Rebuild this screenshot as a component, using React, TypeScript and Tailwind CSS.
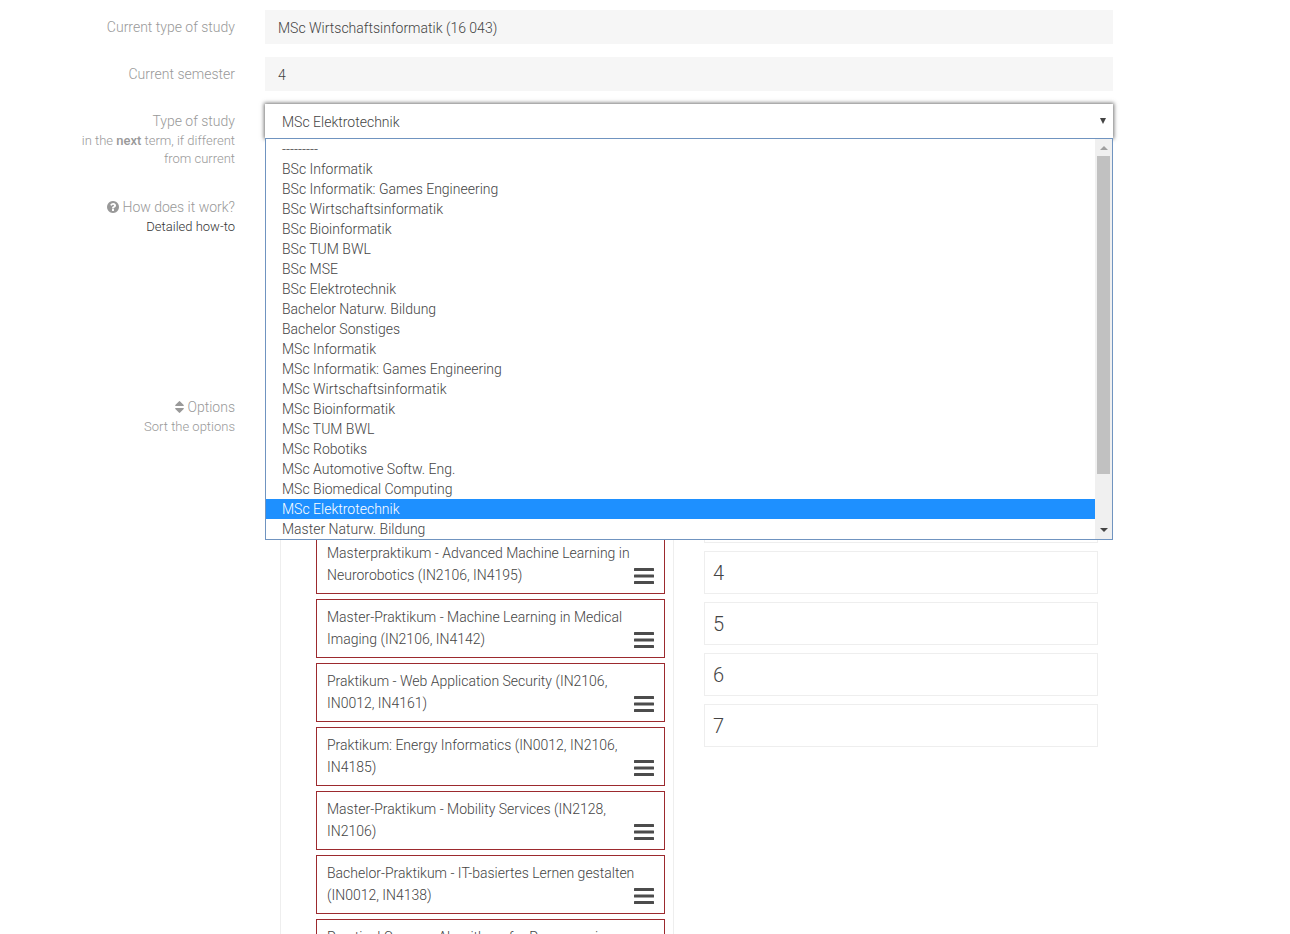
import type { ReactNode } from "react";

const studies = [
  "---------",
  "BSc Informatik",
  "BSc Informatik: Games Engineering",
  "BSc Wirtschaftsinformatik",
  "BSc Bioinformatik",
  "BSc TUM BWL",
  "BSc MSE",
  "BSc Elektrotechnik",
  "Bachelor Naturw. Bildung",
  "Bachelor Sonstiges",
  "MSc Informatik",
  "MSc Informatik: Games Engineering",
  "MSc Wirtschaftsinformatik",
  "MSc Bioinformatik",
  "MSc TUM BWL",
  "MSc Robotiks",
  "MSc Automotive Softw. Eng.",
  "MSc Biomedical Computing",
  "MSc Elektrotechnik",
  "Master Naturw. Bildung",
];

const selected = "MSc Elektrotechnik";

const courses = [
  "Masterpraktikum - Advanced Machine Learning in Neurorobotics (IN2106, IN4195)",
  "Master-Praktikum - Machine Learning in Medical Imaging (IN2106, IN4142)",
  "Praktikum - Web Application Security (IN2106, IN0012, IN4161)",
  "Praktikum: Energy Informatics (IN0012, IN2106, IN4185)",
  "Master-Praktikum - Mobility Services (IN2128, IN2106)",
  "Bachelor-Praktikum - IT-basiertes Lernen gestalten (IN0012, IN4138)",
  "Practical Course - Algorithms for Programming",
];

const ranks = [1, 2, 3, 4, 5, 6, 7];

const QuestionIcon = () => (
  <svg viewBox="128 128 1536 1536" className="mr-[3px] inline-block size-3 align-[-1px]" fill="currentColor" aria-hidden="true">
    <path d="M1024 1376v-192q0-14-9-23t-23-9h-192q-14 0-23 9t-9 23v192q0 14 9 23t23 9h192q14 0 23-9t9-23zm256-672q0-88-55.5-163t-138.5-116-170-41q-243 0-371 213-15 24 8 42l132 100q7 6 19 6 16 0 25-12 53-68 86-92 34-24 86-24 48 0 85.5 26t37.5 59q0 38-20 61t-68 45q-63 28-115.5 86.5t-52.5 125.5v36q0 14 9 23t23 9h192q14 0 23-9t9-23q0-19 21.5-49.5t54.5-49.5q32-18 49-28.5t46-35 44.5-48 28-60.5 12.5-81zm384 192q0 209-103 385.5t-279.5 279.5-385.5 103-385.5-103-279.5-279.5-103-385.5 103-385.5 279.5-279.5 385.5-103 385.5 103 279.5 279.5 103 385.5z" />
  </svg>
);

const SortIcon = () => (
  <svg viewBox="384 192 1024 1408" className="mr-[3px] inline-block h-3 w-[9px] align-[-1px]" fill="currentColor" aria-hidden="true">
    <path d="M1408 1088q0 26-19 45l-448 448q-19 19-45 19t-45-19l-448-448q-19-19-19-45t19-45 45-19h896q26 0 45 19t19 45zm0-384q0 26-19 45t-45 19h-896q-26 0-45-19t-19-45 19-45l448-448q19-19 45-19t45 19l448 448q19 19 19 45z" />
  </svg>
);

const BarsIcon = () => (
  <svg viewBox="0 0 20 16" className="h-4 w-5" fill="#4c4c4c" aria-hidden="true">
    <rect width="20" height="3" rx="0.5" />
    <rect y="6.5" width="20" height="3" rx="0.5" />
    <rect y="13" width="20" height="3" rx="0.5" />
  </svg>
);

const Row = ({ label, children }: { label: ReactNode; children?: ReactNode }) => (
  <div className="flex gap-[30px]">
    <div className="w-[235px] shrink-0 pt-[7px] pl-[70px] text-right leading-5 text-[#999]">{label}</div>
    <div className="min-w-0 flex-1">{children}</div>
  </div>
);

const Arrow = ({ points, fill }: { points: string; fill: string }) => (
  <svg viewBox="0 0 8 4" className="h-1 w-2" fill={fill} aria-hidden="true">
    <polygon points={points} />
  </svg>
);

const StudyList = () => (
  <div className="absolute inset-x-0 top-full z-10 flex border border-[#7094c0] bg-white">
    <ul role="listbox" aria-label="Type of study" className="flex-1">
      {studies.map((study) => (
        <li
          key={study}
          role="option"
          aria-selected={study === selected}
          className={`h-5 pl-4 leading-5 ${study === selected ? "bg-[#1e90ff] text-white" : ""}`}
        >
          {study}
        </li>
      ))}
    </ul>
    <div className="flex w-[17px] flex-col items-center bg-[#f0f0f0]">
      <div className="flex h-[17px] items-center">
        <Arrow points="0,4 4,0 8,4" fill="#a0a0a0" />
      </div>
      <div className="h-[318px] w-[13px] bg-[#c1c1c1]" />
      <div className="mt-auto flex h-[18px] items-center">
        <Arrow points="0,0 4,4 8,0" fill="#444" />
      </div>
    </div>
  </div>
);

const CourseCard = ({ title }: { title: string }) => (
  <li className="flex min-h-[59px] items-end border border-[#9c2a2e] px-2.5 pt-1.5 pb-[7px]">
    <span className="flex-1 self-start leading-[22px]">
      {title}
    </span>
    <button type="button" aria-label="Move" className="-ml-5 pb-0.5">
      <BarsIcon />
    </button>
  </li>
);

const App = () => {
  return (
    <div className="h-screen overflow-hidden bg-white font-['Roboto',sans-serif] text-sm font-light text-[#444]">
      <form className="pt-2.5 pr-[177px]">
        <div className="flex flex-col gap-[13px]">
          <Row label={<label htmlFor="current">Current type of study</label>}>
            <input
              id="current"
              readOnly
              defaultValue="MSc Wirtschaftsinformatik (16 043)"
              className="block h-[34px] w-full bg-[#f6f6f6] px-[13px] pt-0.5"
            />
          </Row>
          <Row label={<label htmlFor="semester">Current semester</label>}>
            <input id="semester" readOnly defaultValue="4" className="block h-[34px] w-full bg-[#f6f6f6] px-[13px] pt-0.5" />
          </Row>
        </div>

        <div className="mt-[13px] h-[86px]">
          <Row
            label={
              <>
                <label htmlFor="study">Type of study</label>
                <p className="pt-px text-[13px] leading-[18px]">
                  in the <b className="font-medium">next</b> term, if different from current
                </p>
              </>
            }
          >
            <div className="relative">
              <select
                id="study"
                defaultValue={selected}
                className="block h-[34px] w-full appearance-none bg-white px-[17px] pt-0.5 shadow-[0_0_4px_1px_rgba(0,0,0,0.55)]"
              >
                {studies.map((study) => (
                  <option key={study}>{study}</option>
                ))}
              </select>
              <svg viewBox="0 0 6 6" className="pointer-events-none absolute top-3.5 right-[7px] size-1.5" fill="#444" aria-hidden="true">
                <polygon points="0,0 6,0 3,6" />
              </svg>
              <StudyList />
            </div>
          </Row>
        </div>

        <div className="h-[200px]">
          <Row
            label={
              <>
                <p>
                  <QuestionIcon />
                  How does it work?
                </p>
                <a href="#howto" className="block pt-px text-[13px] leading-[18px] text-[#333]">
                  Detailed how-to
                </a>
              </>
            }
          />
        </div>

        <Row
          label={
            <>
              <p>
                <SortIcon />
                Options
              </p>
              <p className="pt-px text-[13px] leading-[18px]">Sort the options</p>
            </>
          }
        >
          <div className="grid grid-cols-2">
            <div className="px-[15px] pt-2">
              <ul className="flex flex-col gap-[5px] border border-[#eee] pt-[136px] pr-2 pb-2 pl-[35px]">
                {courses.map((course) => (
                  <CourseCard key={course} title={course} />
                ))}
              </ul>
            </div>
            <ol className="flex flex-col gap-2 px-[15px] pt-2">
              {ranks.map((rank) => (
                <li key={rank} className="h-[43px] border border-[#eee] px-2 text-xl leading-[42px]">
                  {rank}
                </li>
              ))}
            </ol>
          </div>
        </Row>
      </form>
    </div>
  );
};

export default App;
